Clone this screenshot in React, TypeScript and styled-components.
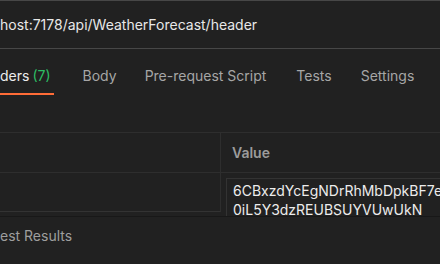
import styled, { createGlobalStyle } from "styled-components";

const GlobalStyle = createGlobalStyle`
  body {
    margin: 0;
    background: #212121;
    font-family: Inter, "Noto Sans", sans-serif;
    overflow: hidden;
  }
`;

const Page = styled.div`
  width: 440px;
  height: 264px;
  display: flex;
  flex-direction: column;
  background: #212121;
  overflow: hidden;
`;

const UrlBar = styled.div`
  height: 47px;
  display: flex;
  align-items: center;
  border-top: 1px solid #474747;
  border-bottom: 1px solid #474747;
  font-size: 14px;
  color: #e8e8e8;
  white-space: nowrap;
`;

const Tabs = styled.div`
  display: flex;
  height: 46px;
`;

const Tab = styled.div<{ $active?: boolean; $gap: number }>`
  display: flex;
  align-items: center;
  padding: 8px 3px 0 0;
  margin-right: ${(p) => p.$gap}px;
  font-size: 14px;
  color: ${(p) => (p.$active ? "#ececec" : "#a6a6a6")};
  border-bottom: 2px solid ${(p) => (p.$active ? "#ff6c37" : "transparent")};
  white-space: nowrap;
`;

const Count = styled.span`
  color: #2dbd64;
  margin-left: 3px;
`;

const Table = styled.div`
  margin-top: 37px;
  border-top: 1px solid #2e2e2e;
  height: 83px;
  overflow: hidden;
`;

const Row = styled.div<{ $height: number }>`
  display: grid;
  grid-template-columns: 221px 1fr;
  height: ${(p) => p.$height}px;
  border-bottom: 1px solid #2e2e2e;
`;

const KeyCell = styled.div<{ $line?: boolean }>`
  border-right: 1px solid #2e2e2e;
  box-sizing: border-box;
  height: ${(p) => (p.$line ? "39px" : "auto")};
  border-bottom: ${(p) => (p.$line ? "1px solid #333" : "none")};
`;

const HeadCell = styled.div`
  display: flex;
  align-items: center;
  padding-left: 11px;
  font-size: 14px;
  font-weight: 600;
  color: #9b9b9b;
`;

const ValueCell = styled.div`
  padding: 5px 0 0 5px;
`;

const ValueBox = styled.div`
  border-top: 1px solid #333;
  border-left: 1px solid #333;
  padding: 2px 0 0 6px;
  font-size: 14px;
  line-height: 19px;
  color: #ececec;
  white-space: nowrap;
`;

const Results = styled.div`
  border-top: 1px solid #181818;
  height: 37px;
  display: flex;
  align-items: center;
  font-size: 14px;
  color: #9e9e9e;
  white-space: nowrap;
`;

export default function App() {
  return (
    <Page>
      <GlobalStyle />
      <UrlBar>host:7178/api/WeatherForecast/header</UrlBar>
      <Tabs>
        <Tab $active $gap={29}>
          ders<Count>(7)</Count>
        </Tab>
        <Tab $gap={25}>Body</Tab>
        <Tab $gap={27}>Pre-request Script</Tab>
        <Tab $gap={26}>Tests</Tab>
        <Tab $gap={0}>Settings</Tab>
      </Tabs>
      <Table>
        <Row $height={39}>
          <KeyCell />
          <HeadCell>Value</HeadCell>
        </Row>
        <Row $height={60}>
          <KeyCell $line />
          <ValueCell>
            <ValueBox>
              6CBxzdYcEgNDrRhMbDpkBF7e
              <br />
              0iL5Y3dzREUBSUYVUwUkN
            </ValueBox>
          </ValueCell>
        </Row>
      </Table>
      <Results>est Results</Results>
    </Page>
  );
}
